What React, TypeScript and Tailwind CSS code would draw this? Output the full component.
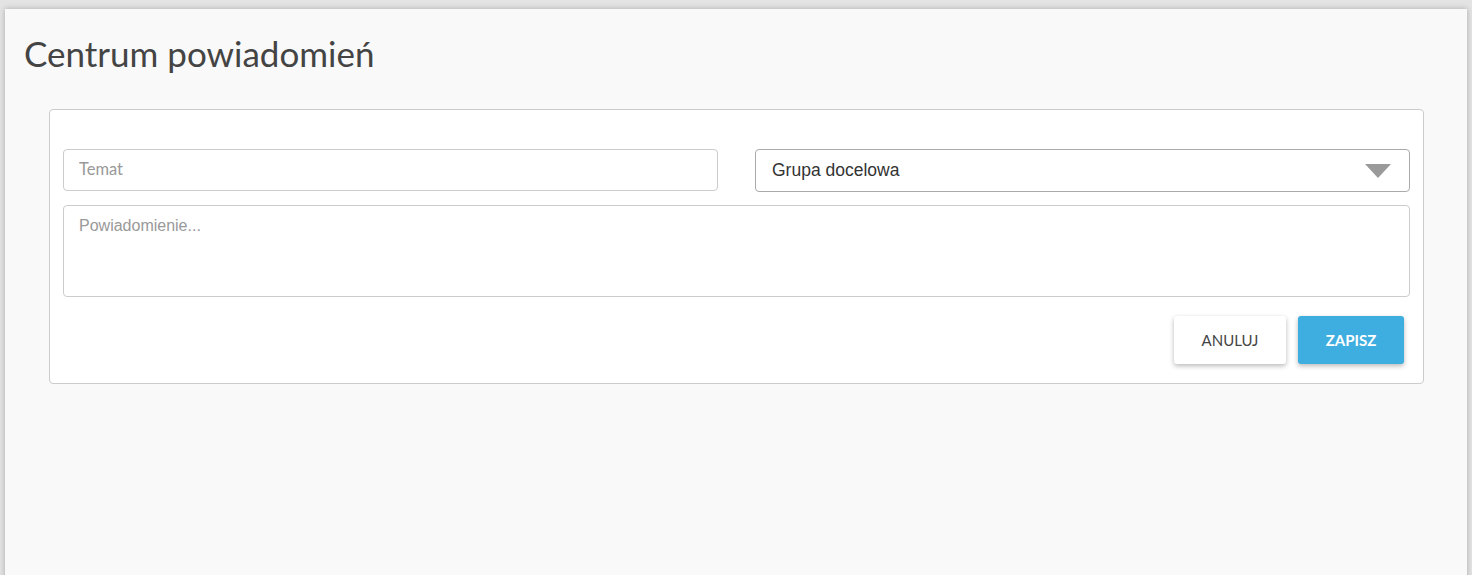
import { useState } from 'react'

function Header() {
  return (
    <h1 className="pt-[21px] pl-[19px] font-['Lato',sans-serif] text-[35px] leading-[46px] font-normal text-[#444]">
      Centrum powiadomień
    </h1>
  )
}

function GroupSelect() {
  return (
    <div className="relative h-[43px] w-full rounded-[4px] border border-[#aaa] bg-white">
      <select
        defaultValue=""
        className="h-full w-full appearance-none bg-transparent pl-4 font-['Liberation_Sans',Arial,sans-serif] text-[17.5px] text-[#333] outline-none"
      >
        <option value="">Grupa docelowa</option>
        <option value="all">Wszyscy</option>
      </select>
      <svg
        className="pointer-events-none absolute top-[14px] right-[18px]"
        width="26"
        height="14"
        viewBox="0 0 26 14"
      >
        <polygon points="0,0 26,0 13,14" fill="#9a9a9a" />
      </svg>
    </div>
  )
}

function NotificationForm() {
  const [subject, setSubject] = useState('')
  const [body, setBody] = useState('')

  return (
    <div className="mt-[33px] mr-[43px] ml-[44px] rounded-[4px] border border-[#ccc] bg-white px-[13px] pt-[39px] pb-[19px]">
      <div className="grid grid-cols-2 gap-[37px]">
        <input
          value={subject}
          onChange={(e) => setSubject(e.target.value)}
          placeholder="Temat"
          className="h-[42px] w-full rounded-[4px] border border-[#ccc] px-[15px] pb-[2px] font-['Lato',sans-serif] text-[16.5px] text-[#333] outline-none placeholder:text-[#999]"
        />
        <GroupSelect />
      </div>
      <textarea
        value={body}
        onChange={(e) => setBody(e.target.value)}
        placeholder="Powiadomienie..."
        className="mt-[13px] block h-[92px] w-full resize-none rounded-[4px] border border-[#ccc] px-[15px] pt-[8px] font-['Liberation_Sans',Arial,sans-serif] text-[16px] text-[#333] outline-none placeholder:text-[#999]"
      />
      <div className="mt-[19px] flex justify-end gap-[12px] pr-[6px]">
        <button className="h-[48px] w-[112px] rounded-[3px] bg-white font-['Lato',sans-serif] text-[15px] text-[#444] shadow-[0_2px_5px_rgba(0,0,0,0.28)]">
          ANULUJ
        </button>
        <button className="h-[48px] w-[106px] rounded-[3px] bg-[#3eade0] font-['Lato',sans-serif] text-[15px] font-bold text-white shadow-[0_2px_5px_rgba(0,0,0,0.28)]">
          ZAPISZ
        </button>
      </div>
    </div>
  )
}

export default function App() {
  return (
    <div className="h-[575px] overflow-hidden bg-[#e4e4e4] pt-[9px] pr-[5px] pl-[5px]">
      <div className="h-[600px] bg-[#f9f9f9] shadow-[0_0_6px_rgba(0,0,0,0.25)]">
        <Header />
        <NotificationForm />
      </div>
    </div>
  )
}
